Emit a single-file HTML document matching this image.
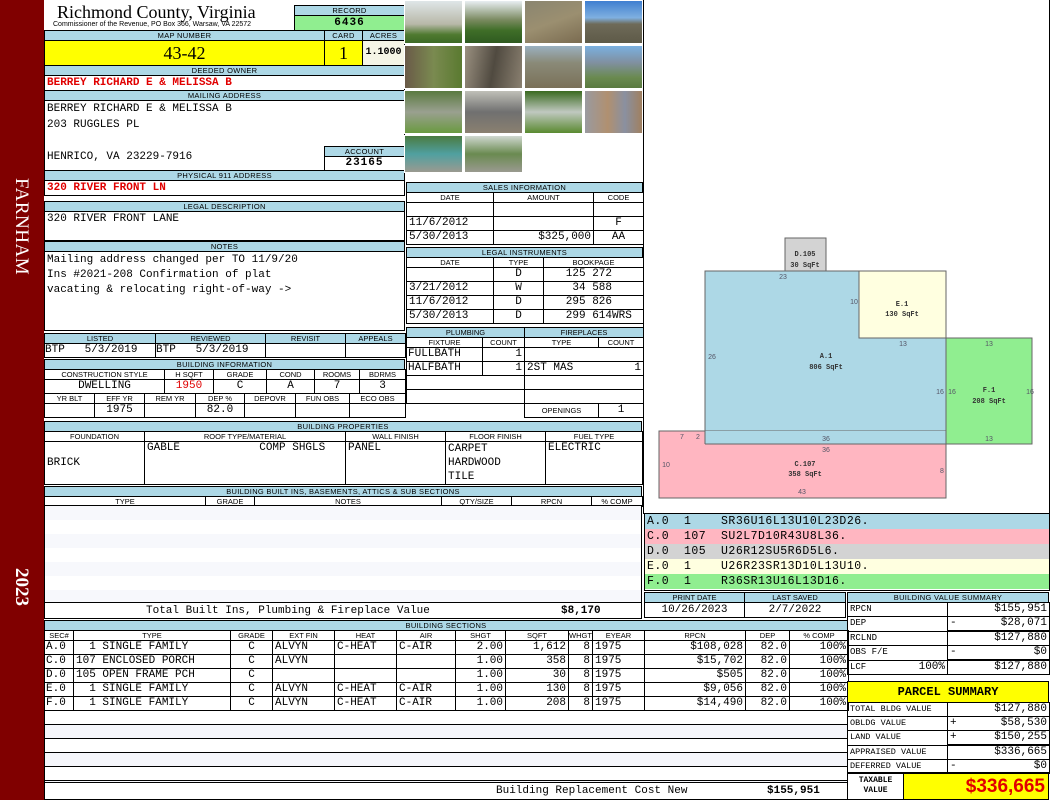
<!DOCTYPE html>
<html><head><meta charset="utf-8"><style>
*{box-sizing:border-box;margin:0;padding:0}
body{width:1050px;height:800px;position:relative;background:#fff;overflow:hidden;font-family:"Liberation Mono",monospace;color:#000}
.a{position:absolute}
.lb{position:absolute;background:#add8e6;border:1px solid #000;font:7.5px "Liberation Sans",sans-serif;text-align:center;line-height:9px;letter-spacing:0.3px}
.bx{position:absolute;border:1px solid #000;background:#fff}
.m{font-family:"Liberation Mono",monospace;font-size:11px}
.r{color:#e00000;font-weight:bold}
table{border-collapse:collapse;table-layout:fixed;position:absolute}
td{border:1px solid #000;padding:0 2px;white-space:nowrap;overflow:hidden}
td.h{background:#fff;font:7.5px "Liberation Sans",sans-serif;text-align:center;height:10px;line-height:9px}
td.v{font:11px "Liberation Mono",monospace;height:14px;line-height:13px}
.c{text-align:center}.rt{text-align:right}
.ph{position:absolute;width:59px;height:44px;border:1px solid #fff}
</style></head><body>

<!-- left band -->
<div class="a" style="left:0;top:0;width:44px;height:800px;background:#800000"></div>
<div class="a" style="left:12px;top:178px;width:20px;height:125px;">
 <div style="transform:rotate(90deg);transform-origin:0 0;position:absolute;left:20px;top:0;width:125px;font:19px 'Liberation Serif',serif;color:#fff;white-space:nowrap;letter-spacing:0.5px">FARNHAM</div></div>
<div class="a" style="left:12px;top:568px;width:20px;height:55px;">
 <div style="transform:rotate(90deg);transform-origin:0 0;position:absolute;left:20px;top:0;width:55px;font:bold 19px 'Liberation Serif',serif;color:#fff;white-space:nowrap">2023</div></div>

<!-- header -->
<div class="a" style="left:57px;top:2px;font:18px 'Liberation Serif',serif;line-height:20px">Richmond County, Virginia</div>
<div class="a" style="left:53px;top:21px;font:7px 'Liberation Sans',sans-serif">Commissioner of the Revenue, PO Box 366, Warsaw, VA 22572</div>
<div class="lb" style="left:294px;top:5px;width:111px;height:11px">RECORD</div>
<div class="a m" style="left:294px;top:15px;width:111px;height:16px;background:#90ee90;border:1px solid #000;text-align:center;font-weight:bold;line-height:14px;letter-spacing:1px">6436</div>

<div class="lb" style="left:44px;top:30px;width:281px;height:11px">MAP NUMBER</div>
<div class="lb" style="left:324px;top:30px;width:39px;height:11px">CARD</div>
<div class="lb" style="left:362px;top:30px;width:43px;height:11px">ACRES</div>
<div class="a" style="left:44px;top:40px;width:281px;height:26px;background:#ffff00;border:1px solid #000;font:18px 'Liberation Serif',serif;text-align:center;line-height:24px">43-42</div>
<div class="a" style="left:324px;top:40px;width:39px;height:26px;background:#ffff00;border:1px solid #000;font:18px 'Liberation Serif',serif;text-align:center;line-height:24px">1</div>
<div class="a" style="left:362px;top:40px;width:43px;height:26px;background:#f5f5e6;border:1px solid #000;text-align:center;font:bold 10px 'Liberation Mono',monospace;line-height:24px">1.1000</div>

<div class="lb" style="left:44px;top:65px;width:361px;height:11px">DEEDED OWNER</div>
<div class="bx m r" style="left:44px;top:75px;width:361px;height:16px;line-height:14px;padding-left:2px">BERREY RICHARD E &amp; MELISSA B</div>
<div class="lb" style="left:44px;top:90px;width:361px;height:11px">MAILING ADDRESS</div>
<div class="bx m" style="left:44px;top:100px;width:361px;height:71px;line-height:16px;padding-left:2px">BERREY RICHARD E &amp; MELISSA B<br>203 RUGGLES PL<br><br>HENRICO, VA 23229-7916</div>
<div class="lb" style="left:324px;top:146px;width:81px;height:11px">ACCOUNT</div>
<div class="bx m" style="left:324px;top:156px;width:81px;height:15px;text-align:center;line-height:13px;font-weight:bold;letter-spacing:1px">23165</div>
<div class="lb" style="left:44px;top:170px;width:361px;height:11px">PHYSICAL 911 ADDRESS</div>
<div class="bx m r" style="left:44px;top:180px;width:361px;height:16px;line-height:14px;padding-left:2px">320 RIVER FRONT LN</div>

<div class="lb" style="left:44px;top:201px;width:361px;height:11px">LEGAL DESCRIPTION</div>
<div class="bx m" style="left:44px;top:211px;width:361px;height:30px;line-height:14px;padding-left:2px">320 RIVER FRONT LANE</div>
<div class="lb" style="left:44px;top:241px;width:361px;height:11px">NOTES</div>
<div class="bx m" style="left:44px;top:251px;width:361px;height:80px;line-height:15px;padding:1px 2px">Mailing address changed per TO 11/9/20<br>Ins #2021-208 Confirmation of plat<br>vacating &amp; relocating right-of-way -&gt;</div>

<!-- listed -->
<table style="left:44px;top:333px;width:361px">
<colgroup><col style="width:111px"><col style="width:110px"><col style="width:80px"><col style="width:60px"></colgroup>
<tr><td class="h" style="background:#add8e6">LISTED</td><td class="h" style="background:#add8e6">REVIEWED</td><td class="h" style="background:#add8e6">REVISIT</td><td class="h" style="background:#add8e6">APPEALS</td></tr>
<tr><td class="v" style="padding:0">BTP&nbsp;&nbsp;&nbsp;5/3/2019</td><td class="v" style="padding:0">BTP&nbsp;&nbsp;&nbsp;5/3/2019</td><td class="v"></td><td class="v"></td></tr></table>

<!-- building info -->
<div class="lb" style="left:44px;top:359px;width:361px;height:11px">BUILDING INFORMATION</div>
<table style="left:44px;top:369px;width:361px">
<colgroup><col style="width:120px"><col style="width:49px"><col style="width:53px"><col style="width:48px"><col style="width:45px"><col style="width:46px"></colgroup>
<tr><td class="h">CONSTRUCTION STYLE</td><td class="h">H SQFT</td><td class="h">GRADE</td><td class="h">COND</td><td class="h">ROOMS</td><td class="h">BDRMS</td></tr>
<tr><td class="v c">DWELLING</td><td class="v c r">1950</td><td class="v c">C</td><td class="v c">A</td><td class="v c">7</td><td class="v c">3</td></tr></table>
<table style="left:44px;top:393px;width:361px">
<colgroup><col style="width:50px"><col style="width:50px"><col style="width:51px"><col style="width:49px"><col style="width:51px"><col style="width:54px"><col style="width:56px"></colgroup>
<tr><td class="h">YR BLT</td><td class="h">EFF YR</td><td class="h">REM YR</td><td class="h">DEP %</td><td class="h">DEPOVR</td><td class="h">FUN OBS</td><td class="h">ECO OBS</td></tr>
<tr><td class="v"></td><td class="v c">1975</td><td class="v"></td><td class="v c">82.0</td><td class="v"></td><td class="v"></td><td class="v"></td></tr></table>

<!-- building properties -->
<div class="lb" style="left:44px;top:421px;width:598px;height:11px">BUILDING PROPERTIES</div>
<table style="left:44px;top:431px;width:598px">
<colgroup><col style="width:100px"><col style="width:201px"><col style="width:100px"><col style="width:100px"><col style="width:97px"></colgroup>
<tr><td class="h">FOUNDATION</td><td class="h">ROOF TYPE/MATERIAL</td><td class="h">WALL FINISH</td><td class="h">FLOOR FINISH</td><td class="h">FUEL TYPE</td></tr>
<tr><td class="v" style="height:43px">BRICK</td><td class="v" style="vertical-align:top">GABLE&nbsp;&nbsp;&nbsp;&nbsp;&nbsp;&nbsp;&nbsp;&nbsp;&nbsp;&nbsp;&nbsp;&nbsp;COMP SHGLS</td><td class="v" style="vertical-align:top">PANEL</td><td class="v" style="vertical-align:top;line-height:14px">CARPET<br>HARDWOOD<br>TILE</td><td class="v" style="vertical-align:top">ELECTRIC</td></tr></table>

<!-- built ins -->
<div class="lb" style="left:44px;top:486px;width:598px;height:11px">BUILDING BUILT INS, BASEMENTS, ATTICS &amp; SUB SECTIONS</div>
<table style="left:44px;top:496px;width:598px">
<colgroup><col style="width:161px"><col style="width:49px"><col style="width:187px"><col style="width:70px"><col style="width:80px"><col style="width:51px"></colgroup>
<tr><td class="h">TYPE</td><td class="h">GRADE</td><td class="h">NOTES</td><td class="h">QTY/SIZE</td><td class="h">RPCN</td><td class="h">% COMP</td></tr></table>
<div class="bx" style="left:44px;top:505px;width:598px;height:98px;background:repeating-linear-gradient(#f7f8fc 0 14px,#fff 14px 28px)"></div>
<div class="bx m" style="left:44px;top:602px;width:598px;height:17px;line-height:16px">
 <span class="a" style="left:101px">Total Built Ins, Plumbing &amp; Fireplace Value</span><span class="a" style="left:516px;font-weight:bold">$8,170</span></div>

<!-- building sections -->
<div class="lb" style="left:44px;top:620px;width:804px;height:11px">BUILDING SECTIONS</div>
<table style="left:44px;top:630px;width:804px">
<colgroup><col style="width:29px"><col style="width:157px"><col style="width:42px"><col style="width:62px"><col style="width:62px"><col style="width:59px"><col style="width:50px"><col style="width:63px"><col style="width:24px"><col style="width:52px"><col style="width:101px"><col style="width:44px"><col style="width:59px"></colgroup>
<tr><td class="h">SEC#</td><td class="h">TYPE</td><td class="h">GRADE</td><td class="h">EXT FIN</td><td class="h">HEAT</td><td class="h">AIR</td><td class="h">SHGT</td><td class="h">SQFT</td><td class="h" style="padding:0">WHGT</td><td class="h">EYEAR</td><td class="h">RPCN</td><td class="h">DEP</td><td class="h">% COMP</td></tr>
<tr><td class="v" style="padding:0 1px">A.0</td><td class="v">&nbsp;&nbsp;1 SINGLE FAMILY</td><td class="v c">C</td><td class="v">ALVYN</td><td class="v">C-HEAT</td><td class="v">C-AIR</td><td class="v rt">2.00</td><td class="v rt">1,612</td><td class="v rt">8</td><td class="v">1975</td><td class="v rt">$108,028</td><td class="v rt">82.0</td><td class="v rt">100%</td></tr>
<tr><td class="v" style="padding:0 1px">C.0</td><td class="v">107 ENCLOSED PORCH</td><td class="v c">C</td><td class="v">ALVYN</td><td class="v"></td><td class="v"></td><td class="v rt">1.00</td><td class="v rt">358</td><td class="v rt">8</td><td class="v">1975</td><td class="v rt">$15,702</td><td class="v rt">82.0</td><td class="v rt">100%</td></tr>
<tr><td class="v" style="padding:0 1px">D.0</td><td class="v">105 OPEN FRAME PCH</td><td class="v c">C</td><td class="v"></td><td class="v"></td><td class="v"></td><td class="v rt">1.00</td><td class="v rt">30</td><td class="v rt">8</td><td class="v">1975</td><td class="v rt">$505</td><td class="v rt">82.0</td><td class="v rt">100%</td></tr>
<tr><td class="v" style="padding:0 1px">E.0</td><td class="v">&nbsp;&nbsp;1 SINGLE FAMILY</td><td class="v c">C</td><td class="v">ALVYN</td><td class="v">C-HEAT</td><td class="v">C-AIR</td><td class="v rt">1.00</td><td class="v rt">130</td><td class="v rt">8</td><td class="v">1975</td><td class="v rt">$9,056</td><td class="v rt">82.0</td><td class="v rt">100%</td></tr>
<tr><td class="v" style="padding:0 1px">F.0</td><td class="v">&nbsp;&nbsp;1 SINGLE FAMILY</td><td class="v c">C</td><td class="v">ALVYN</td><td class="v">C-HEAT</td><td class="v">C-AIR</td><td class="v rt">1.00</td><td class="v rt">208</td><td class="v rt">8</td><td class="v">1975</td><td class="v rt">$14,490</td><td class="v rt">82.0</td><td class="v rt">100%</td></tr>
</table>
<div class="bx" style="left:44px;top:710px;width:804px;height:73px;background:repeating-linear-gradient(#fff 0 13px,#000 13px 14px,#f5f6fb 14px 27px,#000 27px 28px)"></div>
<div class="bx m" style="left:44px;top:782px;width:804px;height:18px;line-height:17px">
 <span class="a" style="left:451px">Building Replacement Cost New</span><span class="a" style="left:722px;font-weight:bold">$155,951</span></div>

<!-- photos -->
<div class="ph" style="left:404px;top:0;background:linear-gradient(#dfe6e8 0,#b8b8a8 55%,#4f7a30 80%,#3d6a25)"></div>
<div class="ph" style="left:464px;top:0;background:linear-gradient(#e8eef2 0,#7a8a60 45%,#3f6e28 70%,#2f5a20)"></div>
<div class="ph" style="left:524px;top:0;background:linear-gradient(160deg,#8a8570,#9b8f70 50%,#7a6b50)"></div>
<div class="ph" style="left:584px;top:0;background:linear-gradient(#3f7fd0 0,#7fb0e0 40%,#6e6a58 55%,#5e5a48)"></div>
<div class="ph" style="left:404px;top:45px;background:linear-gradient(90deg,#6a5a48,#7a8a50 50%,#5a7a30)"></div>
<div class="ph" style="left:464px;top:45px;background:linear-gradient(100deg,#9a9080,#504a40 50%,#8a8070)"></div>
<div class="ph" style="left:524px;top:45px;background:linear-gradient(#9ab0c0,#8a8a78 40%,#7a7058)"></div>
<div class="ph" style="left:584px;top:45px;background:linear-gradient(#7ab0e0,#8090a0 40%,#6a8a50 75%,#5a7a40)"></div>
<div class="ph" style="left:404px;top:90px;background:linear-gradient(#5a7a40,#9aa090 50%,#6a9a40)"></div>
<div class="ph" style="left:464px;top:90px;background:linear-gradient(#c0c0b8,#707070 50%,#8a8070)"></div>
<div class="ph" style="left:524px;top:90px;background:linear-gradient(#3a6a20,#c0c8c0 50%,#5a8a30)"></div>
<div class="ph" style="left:584px;top:90px;background:linear-gradient(90deg,#9a9aa0,#b09070 40%,#8a90a0 70%,#a08060)"></div>
<div class="ph" style="left:404px;top:135px;height:38px;background:linear-gradient(#4a7a40,#50a0a0 50%,#9a9a90)"></div>
<div class="ph" style="left:464px;top:135px;height:38px;background:linear-gradient(#d0d8d0,#6a8a50 50%,#9a9a90)"></div>

<!-- sales -->
<div class="lb" style="left:406px;top:182px;width:237px;height:11px">SALES INFORMATION</div>
<table style="left:406px;top:192px;width:237px">
<colgroup><col style="width:87px"><col style="width:100px"><col style="width:50px"></colgroup>
<tr><td class="h">DATE</td><td class="h">AMOUNT</td><td class="h">CODE</td></tr>
<tr><td class="v"></td><td class="v"></td><td class="v"></td></tr>
<tr><td class="v">11/6/2012</td><td class="v"></td><td class="v c">F</td></tr>
<tr><td class="v">5/30/2013</td><td class="v rt">$325,000</td><td class="v c">AA</td></tr></table>
<div class="lb" style="left:406px;top:247px;width:237px;height:11px">LEGAL INSTRUMENTS</div>
<table style="left:406px;top:257px;width:237px">
<colgroup><col style="width:87px"><col style="width:50px"><col style="width:100px"></colgroup>
<tr><td class="h">DATE</td><td class="h">TYPE</td><td class="h">BOOKPAGE</td></tr>
<tr><td class="v"></td><td class="v c">D</td><td class="v">&nbsp;&nbsp;&nbsp;125 272</td></tr>
<tr><td class="v">3/21/2012</td><td class="v c">W</td><td class="v">&nbsp;&nbsp;&nbsp;&nbsp;34 588</td></tr>
<tr><td class="v">11/6/2012</td><td class="v c">D</td><td class="v">&nbsp;&nbsp;&nbsp;295 826</td></tr>
<tr><td class="v">5/30/2013</td><td class="v c">D</td><td class="v">&nbsp;&nbsp;&nbsp;299 614WRS</td></tr></table>
<!-- plumbing -->
<table style="left:406px;top:327px;width:237px">
<colgroup><col style="width:76px"><col style="width:42px"><col style="width:74px"><col style="width:45px"></colgroup>
<tr><td class="h" colspan="2" style="background:#add8e6">PLUMBING</td><td class="h" colspan="2" style="background:#add8e6">FIREPLACES</td></tr>
<tr><td class="h">FIXTURE</td><td class="h">COUNT</td><td class="h">TYPE</td><td class="h">COUNT</td></tr>
<tr><td class="v" style="padding:0 1px">FULLBATH</td><td class="v rt">1</td><td class="v" colspan="2"></td></tr>
<tr><td class="v" style="padding:0 1px">HALFBATH</td><td class="v rt">1</td><td class="v" colspan="2">2ST MAS<span style="float:right">1</span></td></tr>
<tr><td class="v" colspan="2"></td><td class="v" colspan="2"></td></tr>
<tr><td class="v" colspan="2"></td><td class="v" colspan="2"></td></tr>
<tr><td colspan="2" style="border:none;border-left:1px solid #fff"></td><td class="h" style="height:14px">OPENINGS</td><td class="v c">1</td></tr></table>

<!-- sketch area -->
<div class="a" style="left:643px;top:0;width:407px;height:514px;border-left:1px solid #000;border-right:1px solid #000"></div>
<svg class="a" style="left:644px;top:0" width="405" height="513" font-family="Liberation Sans" font-size="7">
<rect x="141" y="238" width="41" height="33" fill="#d3d3d3" stroke="#666"/>
<rect x="61" y="271" width="241" height="173" fill="#add8e6" stroke="#666"/>
<rect x="215" y="271" width="87" height="67" fill="#ffffe0" stroke="#666"/>
<rect x="302" y="338" width="86" height="106" fill="#90ee90" stroke="#666"/>
<rect x="15" y="431" width="287" height="67" fill="#ffb6c1" stroke="#666"/>
<rect x="61" y="431" width="241" height="13" fill="#add8e6"/>
<line x1="61" y1="431" x2="61" y2="444" stroke="#666"/><line x1="302" y1="431" x2="302" y2="444" stroke="#666"/><line x1="61" y1="444" x2="302" y2="444" stroke="#666"/>
<g font-family="Liberation Mono" font-weight="bold" font-size="7" text-anchor="middle" fill="#333">
<text x="161" y="256">D.105</text><text x="161" y="267">30 SqFt</text>
<text x="258" y="306">E.1</text><text x="258" y="316">130 SqFt</text>
<text x="182" y="358">A.1</text><text x="182" y="369">806 SqFt</text>
<text x="345" y="392">F.1</text><text x="345" y="403">208 SqFt</text>
<text x="161" y="466">C.107</text><text x="161" y="476">358 SqFt</text></g>
<g fill="#556" text-anchor="middle">
<text x="139" y="279">23</text><text x="210" y="304">10</text><text x="259" y="346">13</text><text x="345" y="346">13</text>
<text x="68" y="359">26</text><text x="296" y="394">16</text><text x="308" y="394">16</text><text x="386" y="394">16</text>
<text x="182" y="441">36</text><text x="182" y="452">36</text><text x="345" y="441">13</text>
<text x="38" y="439">7</text><text x="54" y="439">2</text><text x="22" y="467">10</text><text x="298" y="473">8</text><text x="158" y="494">43</text></g>
</svg>

<!-- legend -->
<div class="a m" style="left:644px;top:513px;width:406px;height:78px;border:1px solid #000;font-size:11.5px;line-height:15px;letter-spacing:0.5px">
<div style="background:#add8e6;height:15px;padding-left:2px">A.0&nbsp;&nbsp;1&nbsp;&nbsp;&nbsp;&nbsp;SR36U16L13U10L23D26.</div>
<div style="background:#ffb6c1;height:15px;padding-left:2px">C.0&nbsp;&nbsp;107&nbsp;&nbsp;SU2L7D10R43U8L36.</div>
<div style="background:#d3d3d3;height:15px;padding-left:2px">D.0&nbsp;&nbsp;105&nbsp;&nbsp;U26R12SU5R6D5L6.</div>
<div style="background:#ffffe0;height:15px;padding-left:2px">E.0&nbsp;&nbsp;1&nbsp;&nbsp;&nbsp;&nbsp;U26R23SR13D10L13U10.</div>
<div style="background:#90ee90;height:15px;padding-left:2px">F.0&nbsp;&nbsp;1&nbsp;&nbsp;&nbsp;&nbsp;R36SR13U16L13D16.</div></div>

<!-- print date -->
<table style="left:644px;top:592px;width:201px">
<colgroup><col style="width:100px"><col style="width:101px"></colgroup>
<tr><td class="h" style="background:#add8e6">PRINT DATE</td><td class="h" style="background:#add8e6">LAST SAVED</td></tr>
<tr><td class="v c" style="height:15px">10/26/2023</td><td class="v c" style="height:15px">2/7/2022</td></tr></table>

<!-- building value summary -->
<div class="lb" style="left:847px;top:592px;width:202px;height:11px">BUILDING VALUE SUMMARY</div>
<table style="left:847px;top:602px;width:202px">
<colgroup><col style="width:100px"><col style="width:102px"></colgroup>
<tr><td class="v" style="font-size:9px">RPCN</td><td class="v rt">$155,951</td></tr>
<tr><td class="v" style="font-size:9px">DEP</td><td class="v rt"><span style="float:left">-</span>$28,071</td></tr>
<tr><td class="v" style="font-size:9px">RCLND</td><td class="v rt" style="border-top:2px solid #000">$127,880</td></tr>
<tr><td class="v" style="font-size:9px">OBS F/E</td><td class="v rt"><span style="float:left">-</span>$0</td></tr>
<tr><td class="v" style="font-size:9px">LCF<span style="float:right;font-size:11px">100%</span></td><td class="v rt" style="border-top:2px solid #000">$127,880</td></tr></table>

<!-- parcel summary -->
<div class="a" style="left:847px;top:681px;width:202px;height:22px;background:#ffff00;border:1px solid #000;font:bold 12px 'Liberation Mono',monospace;text-align:center;line-height:20px">PARCEL SUMMARY</div>
<table style="left:847px;top:702px;width:202px">
<colgroup><col style="width:100px"><col style="width:102px"></colgroup>
<tr><td class="v" style="font-size:8.5px">TOTAL BLDG VALUE</td><td class="v rt">$127,880</td></tr>
<tr><td class="v" style="font-size:8.5px">OBLDG VALUE</td><td class="v rt"><span style="float:left">+</span>$58,530</td></tr>
<tr><td class="v" style="font-size:8.5px">LAND VALUE</td><td class="v rt"><span style="float:left">+</span>$150,255</td></tr>
<tr><td class="v" style="font-size:8.5px">APPRAISED VALUE</td><td class="v rt" style="border-top:2px solid #000">$336,665</td></tr>
<tr><td class="v" style="font-size:8.5px">DEFERRED VALUE</td><td class="v rt"><span style="float:left">-</span>$0</td></tr></table>
<div class="a" style="left:847px;top:772px;width:57px;height:28px;border:1px solid #000;font:bold 8px 'Liberation Mono',monospace;text-align:center;line-height:10px;padding-top:3px">TAXABLE<br>VALUE</div>
<div class="a" style="left:903px;top:772px;width:146px;height:28px;background:#ffff00;border:1px solid #000;border-top:2px solid #000;font:bold 19px 'Liberation Sans',sans-serif;color:#e00000;text-align:right;line-height:25px;padding-right:3px">$336,665</div>
</body></html>
